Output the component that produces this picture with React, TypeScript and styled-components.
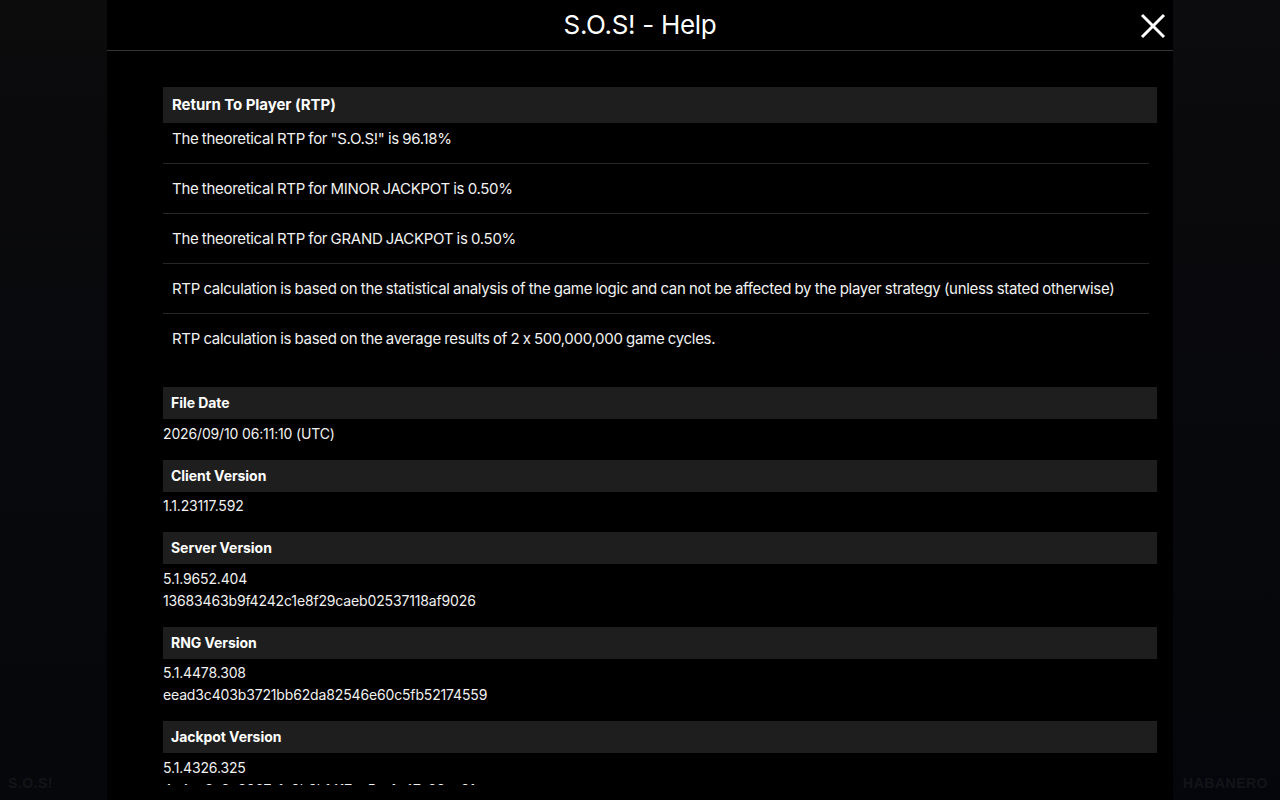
import styled, { createGlobalStyle } from "styled-components";

const GlobalStyle = createGlobalStyle`
  html, body {
    margin: 0;
    padding: 0;
    background: #06070a;
  }
  body {
    font-family: Inter, "Noto Sans", "Liberation Sans", sans-serif;
    font-feature-settings: "calt" 0;
    -webkit-font-smoothing: antialiased;
  }
`;

interface RtpLine {
  text: string;
}

interface InfoSection {
  title: string;
  values: string[];
}

const RTP_LINES: RtpLine[] = [
  { text: 'The theoretical RTP for "S.O.S!" is 96.18%' },
  { text: "The theoretical RTP for MINOR JACKPOT is 0.50%" },
  { text: "The theoretical RTP for GRAND JACKPOT is 0.50%" },
  {
    text: "RTP calculation is based on the statistical analysis of the game logic and can not be affected by the player strategy (unless stated otherwise)",
  },
  { text: "RTP calculation is based on the average results of 2 x 500,000,000 game cycles." },
];

const INFO: InfoSection[] = [
  { title: "File Date", values: ["2026/09/10 06:11:10 (UTC)"] },
  { title: "Client Version", values: ["1.1.23117.592"] },
  {
    title: "Server Version",
    values: ["5.1.9652.404", "13683463b9f4242c1e8f29caeb02537118af9026"],
  },
  {
    title: "RNG Version",
    values: ["5.1.4478.308", "eead3c403b3721bb62da82546e60c5fb52174559"],
  },
  {
    title: "Jackpot Version",
    values: ["5.1.4326.325", "4e4ce3c0e3067a1c0b3b1417ea5aa1e47e20ae01"],
  },
];

const Page = styled.div`
  width: 1280px;
  height: 800px;
  overflow: hidden;
  display: grid;
  grid-template-columns: 107px 1066px 107px;
  background: #07080b;
`;

const SideStrip = styled.div<{ $align: "left" | "right" }>`
  display: flex;
  flex-direction: column;
  justify-content: flex-end;
  align-items: ${(p) => (p.$align === "left" ? "flex-start" : "flex-end")};
  padding: 0 12px 9px ${(p) => (p.$align === "left" ? "8px" : "0")};
  background: ${(p) =>
    p.$align === "left"
      ? "linear-gradient(180deg, #0c0c0d 0%, #0a0a0c 18%, #08090c 50%, #06070b 100%)"
      : "linear-gradient(180deg, #0c0c0e 0%, #09090c 30%, #07080c 70%, #05060b 100%)"};
`;

const GameLabel = styled.span`
  font-family: "Liberation Sans", Arial, sans-serif;
  font-weight: 700;
  font-size: 14px;
  letter-spacing: 0.5px;
  color: #121419;
`;

const Modal = styled.div`
  background: #000;
  display: flex;
  flex-direction: column;
  height: 800px;
  padding-bottom: 15px;
  box-sizing: border-box;
`;

const Header = styled.header`
  height: 50px;
  flex-shrink: 0;
  border-bottom: 1px solid #353535;
  display: grid;
  grid-template-columns: 60px 1fr 60px;
  align-items: center;
`;

const Title = styled.h1`
  grid-column: 2;
  margin: 0;
  text-align: center;
  color: #fff;
  font-size: 26px;
  font-weight: 400;
  letter-spacing: -0.3px;
  line-height: 50px;
`;

const CloseButton = styled.button`
  grid-column: 3;
  justify-self: end;
  margin-right: 7px;
  margin-top: 1px;
  width: 26px;
  height: 26px;
  padding: 0;
  border: none;
  background: transparent;
  display: flex;
  align-items: center;
  justify-content: center;
  cursor: pointer;
`;

const Body = styled.div`
  flex: 1;
  overflow: hidden;
  padding: 36px 16px 0 56px;
`;

const SectionHeader = styled.div<{ $large?: boolean }>`
  background: #1e1e1e;
  color: #fff;
  font-weight: 700;
  font-size: ${(p) => (p.$large ? "15px" : "14px")};
  height: ${(p) => (p.$large ? "36px" : "32px")};
  line-height: ${(p) => (p.$large ? "36px" : "32px")};
  padding-left: ${(p) => (p.$large ? "9px" : "8px")};
  letter-spacing: -0.05px;
`;

const RtpTable = styled.div`
  margin-bottom: 24px;
`;

const RtpRow = styled.div<{ $first?: boolean; $last?: boolean }>`
  margin-right: 8px;
  padding: ${(p) => (p.$first ? "6.5px" : "15.5px")} 9px 15.5px;
  font-size: 15px;
  line-height: 18px;
  letter-spacing: -0.3px;
  word-spacing: -0.5px;
  color: #f2f2f2;
  white-space: nowrap;
  border-bottom: ${(p) => (p.$last ? "none" : "1px solid #262626")};
`;

const InfoBlock = styled.div`
  padding: 3.5px 0 15px;
`;

const InfoValue = styled.div`
  font-size: 14px;
  line-height: 22px;
  letter-spacing: -0.15px;
  color: #f2f2f2;
  white-space: nowrap;
`;

function CloseIcon() {
  return (
    <svg width="26" height="26" viewBox="0 0 26 26">
      <path
        d="M2 2 L24 24 M24 2 L2 24"
        stroke="#fff"
        strokeWidth="3"
        fill="none"
      />
    </svg>
  );
}

export default function App() {
  return (
    <>
      <GlobalStyle />
      <Page>
        <SideStrip $align="left">
          <GameLabel>S.O.S!</GameLabel>
        </SideStrip>
        <Modal>
          <Header>
            <Title>S.O.S! - Help</Title>
            <CloseButton aria-label="Close">
              <CloseIcon />
            </CloseButton>
          </Header>
          <Body>
            <SectionHeader $large>Return To Player (RTP)</SectionHeader>
            <RtpTable>
              {RTP_LINES.map((line, i) => (
                <RtpRow key={i} $first={i === 0} $last={i === RTP_LINES.length - 1}>
                  {line.text}
                </RtpRow>
              ))}
            </RtpTable>
            {INFO.map((section) => (
              <div key={section.title}>
                <SectionHeader>{section.title}</SectionHeader>
                <InfoBlock>
                  {section.values.map((v) => (
                    <InfoValue key={v}>{v}</InfoValue>
                  ))}
                </InfoBlock>
              </div>
            ))}
          </Body>
        </Modal>
        <SideStrip $align="right">
          <GameLabel>HABANERO</GameLabel>
        </SideStrip>
      </Page>
    </>
  );
}
